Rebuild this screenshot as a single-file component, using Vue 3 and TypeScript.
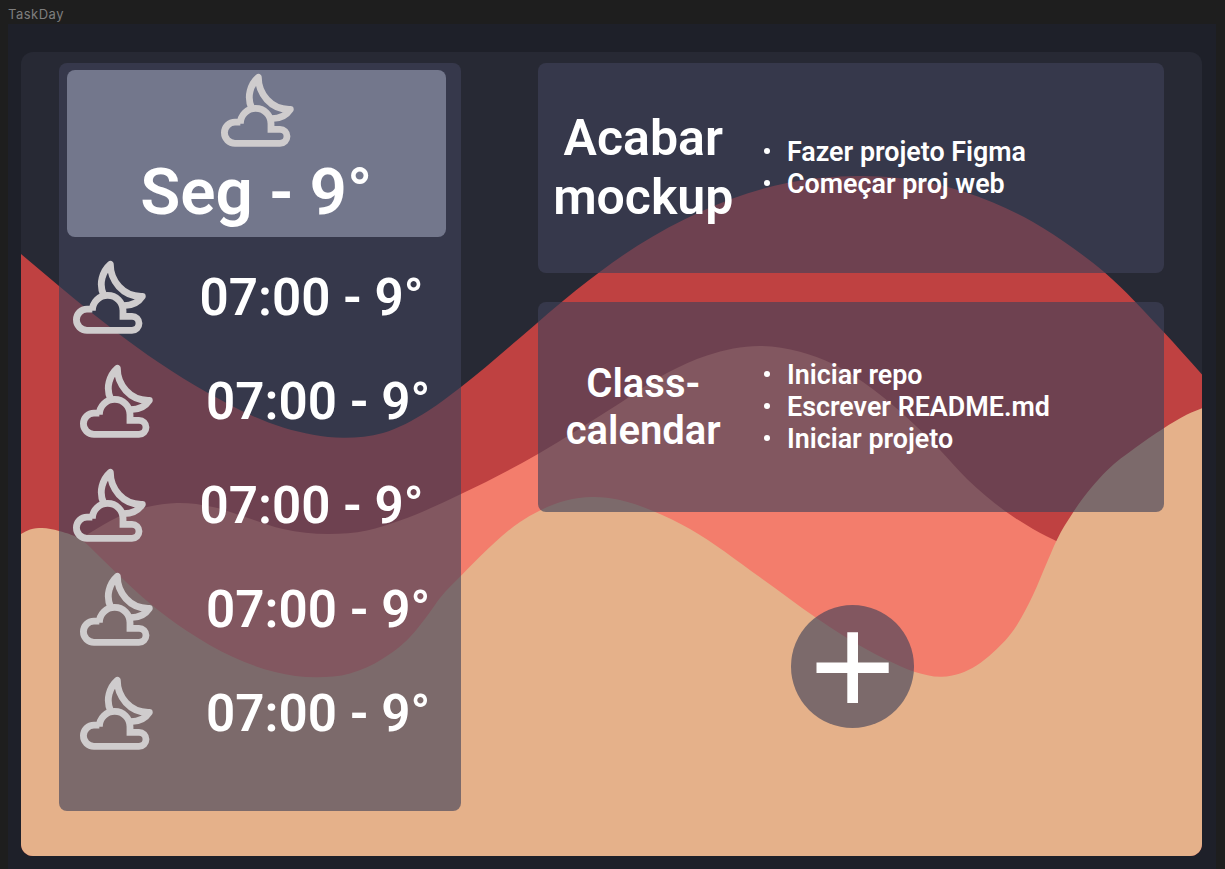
<script setup lang="ts">
type Point = [number, number]

interface Hour {
  id: number
  label: string
  shifted: boolean
}

interface Task {
  title: string[]
  size: 'large' | 'small'
  items: string[]
}

const hours: Hour[] = [
  { id: 1, label: '07:00 - 9°', shifted: false },
  { id: 2, label: '07:00 - 9°', shifted: true },
  { id: 3, label: '07:00 - 9°', shifted: false },
  { id: 4, label: '07:00 - 9°', shifted: true },
  { id: 5, label: '07:00 - 9°', shifted: true },
]

const tasks: Task[] = [
  { title: ['Acabar', 'mockup'], size: 'large', items: ['Fazer projeto Figma', 'Começar proj web'] },
  { title: ['Class-', 'calendar'], size: 'small', items: ['Iniciar repo', 'Escrever README.md', 'Iniciar projeto'] },
]

// Slope at point i, weighted by the widths of its two neighbouring spans.
function slope(points: Point[], i: number): number {
  const at = (k: number) => (points[k + 1][1] - points[k][1]) / (points[k + 1][0] - points[k][0])
  if (i === 0) return at(0)
  if (i === points.length - 1) return at(i - 1)
  const before = points[i][0] - points[i - 1][0]
  const after = points[i + 1][0] - points[i][0]
  return (at(i - 1) * after + at(i) * before) / (before + after)
}

// Closed area below a smooth curve through the given points.
function wave(points: Point[]): string {
  const first = points[0]
  const last = points[points.length - 1]
  let d = `M${first[0]} 860L${first[0]} ${first[1]}`
  for (let i = 0; i < points.length - 1; i++) {
    const [x1, y1] = points[i]
    const [x2, y2] = points[i + 1]
    const h = (x2 - x1) / 3
    d += `C${x1 + h} ${y1 + slope(points, i) * h} ${x2 - h} ${y2 - slope(points, i + 1) * h} ${x2} ${y2}`
  }
  return `${d}L${last[0]} 860Z`
}

const red = wave([
  [21, 254], [59, 286], [118, 333.2], [158, 362], [208, 393], [283, 427.5], [345, 437.7],
  [383, 433], [428, 411], [461, 387], [520, 337.7], [576, 290.3], [637, 246], [700, 212],
  [787, 183], [860, 176], [935, 184], [993, 202.5], [1033, 222], [1073, 248], [1105, 272.7],
  [1163, 331.3], [1202, 374.5],
])
const coral = wave([
  [80, 539], [88, 534], [118, 517], [147, 507], [177, 503], [213, 507], [248, 518], [283, 529], [328, 534],
  [367, 530.5], [400, 520.5], [461, 494], [538, 454], [617, 405],
  [667, 373], [707, 355.5], [760, 346], [800, 351.7], [833, 364], [863, 382], [903, 414], [940, 450],
  [967, 479], [1005, 511], [1033, 529], [1060, 543],
])
const sand = wave([
  [21, 534], [30, 529.5], [42, 528], [59, 531], [83, 541], [100, 557], [117, 573.5], [150, 603.5], [187, 631],
  [233, 657], [275, 672], [317, 677.3], [350, 673.5], [383, 658.5], [410, 637], [430, 612], [440, 598],
  [461, 575.7], [480, 556.5], [520, 522], [539, 511], [566, 500.5], [592, 497], [620, 500], [653, 511],
  [690, 529], [760, 577.3], [815, 617], [843, 635.5], [887, 660], [915, 672], [942, 676.8], [960, 673.5],
  [993, 652.5], [1017, 625], [1033, 595], [1048, 560], [1056, 541.7], [1074, 511], [1107, 470.5],
  [1135, 448], [1163, 428.7], [1187, 414.5], [1202, 408.3],
])
</script>

<template>
  <div class="canvas">
    <svg class="symbols" aria-hidden="true">
      <symbol id="night-cloud" viewBox="660 219 225 225">
        <g fill="none" stroke="#cfcccd" stroke-width="20.5">
          <path d="M705 366.5H721V371A46 46 0 0 1 813 371V388H840A21 21 0 0 1 840 430H705A31.7 31.7 0 0 1 705 366.5Z" />
          <path stroke-linejoin="round" d="M755 324C739 290 752 252 775 232C775 280 812 330 871 328C860 345 840 356 815 356" />
        </g>
      </symbol>
    </svg>
    <div class="label">TaskDay</div>
    <div class="frame">
      <main class="board">
        <svg class="waves" viewBox="21 52 1181 804" preserveAspectRatio="none" aria-hidden="true">
          <path class="red" :d="red" />
          <path class="coral" :d="coral" />
          <path class="sand" :d="sand" />
        </svg>
        <aside class="weather">
          <header class="today">
            <svg class="icon"><use href="#night-cloud" /></svg>
            <h1>Seg - 9°</h1>
          </header>
          <ul class="hours">
            <li v-for="hour in hours" :key="hour.id" :class="{ shifted: hour.shifted }">
              <svg class="icon"><use href="#night-cloud" /></svg>
              <span>{{ hour.label }}</span>
            </li>
          </ul>
        </aside>
        <section class="tasks">
          <article v-for="(task, i) in tasks" :key="i" class="task" :class="task.size">
            <h2><span v-for="line in task.title" :key="line">{{ line }}</span></h2>
            <ul>
              <li v-for="item in task.items" :key="item">{{ item }}</li>
            </ul>
          </article>
          <button class="add" aria-label="Adicionar">
            <svg viewBox="0 0 123 123" aria-hidden="true">
              <path fill="#fff" d="M56.3 27.3H67V57.5H97.7V68H67V98H56.3V68H25.5V57.5H56.3Z" />
            </svg>
          </button>
        </section>
      </main>
    </div>
  </div>
</template>

<style>
body {
  background: #1e1e1e;
  overflow: hidden;
}
</style>

<style scoped>
.canvas {
  box-sizing: border-box;
  width: 1225px;
  height: 869px;
  padding: 0 9px 0 8px;
  overflow: hidden;
  background: #1e1e1e;
  color: #fff;
  font-family: Roboto, sans-serif;
  font-weight: 600;
}
.symbols {
  position: absolute;
  width: 0;
  height: 0;
}
.label {
  height: 24px;
  color: #7e7e7e;
  font: 400 13px/28px Inter, sans-serif;
  letter-spacing: 0.5px;
}
.frame {
  box-sizing: border-box;
  height: 845px;
  padding: 28px 14px 13px 13px;
  background: #1e2029;
}
.board {
  position: relative;
  box-sizing: border-box;
  display: flex;
  gap: 77px;
  height: 804px;
  padding: 11px 38px;
  overflow: hidden;
  border-radius: 12px;
  background: #272934;
}
.waves {
  position: absolute;
  inset: 0;
  width: 100%;
  height: 100%;
}
.red { fill: #bf4141; }
.coral { fill: #f37d6c; }
.sand { fill: #e5b18a; }
.weather,
.tasks {
  position: relative;
}
.weather,
.task,
.add {
  background: rgba(64, 65, 88, 0.63);
}
.weather {
  box-sizing: border-box;
  width: 402px;
  height: 748px;
  padding: 7px 15px 0 7.5px;
  border-radius: 8px;
}
.icon {
  flex: none;
  display: block;
  width: 75px;
  height: 75px;
}
.today {
  display: flex;
  flex-direction: column;
  align-items: center;
  box-sizing: border-box;
  height: 167px;
  padding-top: 3px;
  border-radius: 8px;
  background: #73778c;
}
.today .icon {
  margin-left: 3px;
}
h1 {
  margin: 5px 0 0;
  font-size: 65.6px;
  font-weight: 600;
  line-height: 77px;
  white-space: pre;
}
ul {
  margin: 0;
  padding: 0;
  list-style: none;
}
.hours {
  padding-top: 8px;
}
.hours li {
  display: flex;
  gap: 52.6px;
  height: 104px;
  padding: 15px 0 0 5.4px;
  box-sizing: border-box;
  font-size: 51.2px;
  line-height: 75px;
  white-space: pre;
}
.hours li.shifted {
  padding-left: 12px;
}
.tasks {
  display: flex;
  flex-direction: column;
  width: 625.5px;
}
.task {
  display: flex;
  align-items: center;
  height: 209.5px;
  margin-bottom: 29.5px;
  border-radius: 8px;
}
h2 {
  display: flex;
  flex-direction: column;
  width: 210.5px;
  margin: 0;
  font-weight: 600;
  text-align: center;
}
.large h2 {
  font-size: 50px;
  line-height: 58.5px;
}
.small h2 {
  font-size: 40px;
  line-height: 47px;
}
.task ul {
  padding-left: 38.5px;
  font-size: 26.85px;
  line-height: 32px;
}
.task li {
  display: flex;
  align-items: center;
  white-space: nowrap;
}
.task li::before {
  content: '';
  width: 6.5px;
  height: 6.5px;
  margin: -2px 17px 0 -23.5px;
  border-radius: 50%;
  background: #fff;
}
.add {
  width: 123px;
  height: 123px;
  margin: 64px 0 0 253px;
  padding: 0;
  border: 0;
  border-radius: 50%;
}
.add svg {
  display: block;
}
</style>
